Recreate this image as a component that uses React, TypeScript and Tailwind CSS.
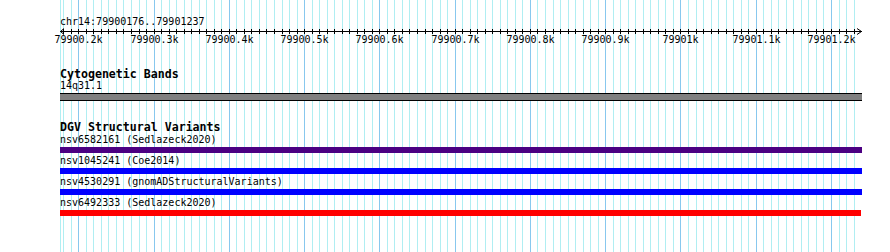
const mono = "font-['DejaVu_Sans_Mono','Liberation_Mono',monospace]"

// genome ruler: minor tick every 10bp, major every 100bp
const minorStep = 7.527
const majorStart = 78.3
const ticks = Array.from({ length: 106 }, (_, i) => i - 2)
const majors = [
  '79900.2k',
  '79900.3k',
  '79900.4k',
  '79900.5k',
  '79900.6k',
  '79900.7k',
  '79900.8k',
  '79900.9k',
  '79901k',
  '79901.1k',
  '79901.2k',
]

const tickX = (k: number) => Math.round(majorStart + k * minorStep)

const variants = [
  { name: 'nsv6582161 (Sedlazeck2020)', color: 'bg-[#4b0082]', width: 'w-[802px]' },
  { name: 'nsv1045241 (Coe2014)', color: 'bg-[#0000ff]', width: 'w-[802px]' },
  { name: 'nsv4530291 (gnomADStructuralVariants)', color: 'bg-[#0000ff]', width: 'w-[802px]' },
  { name: 'nsv6492333 (Sedlazeck2020)', color: 'bg-[#ff0000]', width: 'w-[801px]' },
]

function Grid() {
  return (
    <svg className="absolute inset-0" width={890} height={252}>
      <line x1={60.5} x2={60.5} y1={0} y2={252} stroke="#b0eef2" />
      {ticks.map((k) => {
        const x = tickX(k) + 0.5
        const major = k % 10 === 0
        return <line key={k} x1={x} x2={x} y1={0} y2={252} stroke={major ? '#88c8ee' : '#b0eef2'} />
      })}
    </svg>
  )
}

function Ruler() {
  return (
    <div className="relative h-[17px] w-[802px]">
      <svg className="absolute left-0 top-0" width={802} height={8}>
        <line x1={0} x2={802} y1={3.5} y2={3.5} stroke="#000" />
        <polyline points="4,0.5 0.5,3.5 4,6.5" fill="none" stroke="#000" />
        <polyline points="797,0.5 801.5,3.5 797,6.5" fill="none" stroke="#000" />
        {ticks.map((k) => {
          const x = tickX(k) - 60 + 0.5
          return <line key={k} x1={x} x2={x} y1={1} y2={6} stroke="#000" />
        })}
      </svg>
      {majors.map((label, i) => (
        <span
          key={label}
          className="absolute top-[5px] -translate-x-1/2 text-[10px] leading-[13px] whitespace-nowrap text-black"
          style={{ left: tickX(i * 10) - 60 + 0.5 }}
        >
          {label}
        </span>
      ))}
    </div>
  )
}

function TrackTitle({ title }: { title: string }) {
  return <div className="h-[10px] text-[11.6px] leading-[10px] font-bold whitespace-nowrap text-black">{title}</div>
}

export default function App() {
  return (
    <div className={`relative h-[252px] w-[890px] overflow-hidden bg-white ${mono}`}>
      <Grid />
      <div className="relative flex flex-col pl-[60px] pt-[15px]">
        <div className="h-[13px] text-[10px] leading-[13px] text-black">chr14:79900176..79901237</div>
        <Ruler />

        <section className="mt-[24px] flex flex-col">
          <TrackTitle title="Cytogenetic Bands" />
          <div className="h-[14px] text-[10px] leading-[14px] text-black">14q31.1</div>
          <div className="h-[8px] w-[802px] border-y border-black bg-[#808080]" />
        </section>

        <section className="mt-[21px] flex flex-col">
          <TrackTitle title="DGV Structural Variants" />
          {variants.map((v) => (
            <div key={v.name} className="flex flex-col">
              <div className="h-[15px] text-[10px] leading-[15px] whitespace-nowrap text-black">{v.name}</div>
              <div className={`h-[6px] ${v.width} ${v.color}`} />
            </div>
          ))}
        </section>
      </div>
    </div>
  )
}
